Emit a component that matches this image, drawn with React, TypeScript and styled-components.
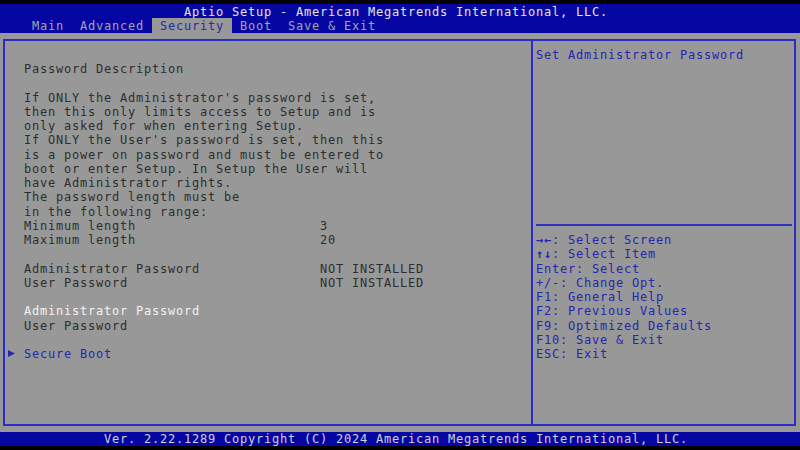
import styled, { createGlobalStyle } from 'styled-components';

const ROW = 14.25;

const GlobalStyle = createGlobalStyle`
    html, body {
        margin: 0;
        padding: 0;
        background: #000;
    }
`;

const Screen = styled.div`
    width: 800px;
    height: 450px;
    box-sizing: border-box;
    padding-top: 4px;
    background: #000;
    display: flex;
    flex-direction: column;
    font-family: "DejaVu Sans Mono", "Liberation Mono", monospace;
    font-size: 12px;
    letter-spacing: 0.776px;
    line-height: ${ROW}px;
    white-space: pre;
`;

const Header = styled.div`
    background: #0606a2;
`;

const Title = styled.div`
    height: ${ROW}px;
    box-sizing: border-box;
    padding: 2px 8px 0 0;
    line-height: ${ROW - 2}px;
    text-align: center;
    color: #e4e4e4;
`;

const TabBar = styled.div`
    display: flex;
    height: ${ROW}px;
    padding-left: 24px;
`;

const Tab = styled.div<{ $active?: boolean }>`
    box-sizing: border-box;
    height: ${ROW}px;
    padding: 2px 8px 0;
    line-height: ${ROW - 2}px;
    color: ${p => (p.$active ? '#2a2aa8' : '#a4a4b0')};
    background: ${p => (p.$active ? '#989898' : 'transparent')};
`;

const Body = styled.div`
    height: 399px;
    box-sizing: border-box;
    padding: 6px 4px 6px 3px;
    background: #989898;
`;

const Frame = styled.div`
    height: 100%;
    box-sizing: border-box;
    display: grid;
    grid-template-columns: 528px 1fr;
    border: 2px solid #2c2cc8;
`;

const LeftPanel = styled.div`
    padding: 21.5px 0 0 3px;
    border-right: 2px solid #2c2cc8;
`;

const RightPanel = styled.div`
    padding: 7.25px 2px 0 3px;
    color: #2626b0;
`;

type Tone = 'dark' | 'white' | 'blue';

const toneColor: Record<Tone, string> = {
    dark: '#2e2e2e',
    white: '#f2f2f2',
    blue: '#2626b0',
};

const Row = styled.div<{ $tone?: Tone }>`
    display: grid;
    grid-template-columns: 16px 296px auto;
    height: ${ROW}px;
    color: ${p => toneColor[p.$tone || 'dark']};
`;

const Marker = styled.div`
    display: flex;
    align-items: center;
    padding-bottom: 1px;
`;

const Spacer = styled.div<{ $rows: number }>`
    height: ${p => p.$rows * ROW}px;
`;

const Separator = styled.div`
    height: ${ROW}px;
    margin-top: -1px;
    margin-bottom: 1px;
    display: flex;
    align-items: center;

    &::after {
        content: '';
        flex: 1;
        height: 2px;
        background: #3232c0;
    }
`;

const HelpLine = styled.div`
    height: ${ROW}px;
`;

const Keys = styled.span`
    font-weight: bold;
`;

const Footer = styled.div`
    height: ${ROW}px;
    padding-right: 8px;
    text-align: center;
    background: #0606a2;
    color: #d0d0d8;
`;

const description = [
    'If ONLY the Administrator\'s password is set,',
    'then this only limits access to Setup and is',
    'only asked for when entering Setup.',
    'If ONLY the User\'s password is set, then this',
    'is a power on password and must be entered to',
    'boot or enter Setup. In Setup the User will',
    'have Administrator rights.',
    'The password length must be',
    'in the following range:',
];

const help: [string, string][] = [
    ['\u2192\u2190', ': Select Screen'],
    ['\u2191\u2193', ': Select Item'],
    ['', 'Enter: Select'],
    ['', '+/-: Change Opt.'],
    ['', 'F1: General Help'],
    ['', 'F2: Previous Values'],
    ['', 'F9: Optimized Defaults'],
    ['', 'F10: Save & Exit'],
    ['', 'ESC: Exit'],
];

const tabs = ['Main', 'Advanced', 'Security', 'Boot', 'Save & Exit'];

const Arrow = () => (
    <svg width="7" height="7" viewBox="0 0 7 7">
        <polygon points="0,0 7,3.5 0,7" fill="#2626b0" />
    </svg>
);

export default function App() {
    return (
        <>
            <GlobalStyle />
            <Screen>
                <Header>
                    <Title>Aptio Setup - American Megatrends International, LLC.</Title>
                    <TabBar>
                        {tabs.map(t => (
                            <Tab key={t} $active={t === 'Security'}>{t}</Tab>
                        ))}
                    </TabBar>
                </Header>
                <Body>
                    <Frame>
                        <LeftPanel>
                            <Row><span /><span>Password Description</span></Row>
                            <Spacer $rows={1} />
                            {description.map(line => (
                                <Row key={line}><span /><span>{line}</span></Row>
                            ))}
                            <Row><span /><span>Minimum length</span><span>3</span></Row>
                            <Row><span /><span>Maximum length</span><span>20</span></Row>
                            <Spacer $rows={1} />
                            <Row><span /><span>Administrator Password</span><span>NOT INSTALLED</span></Row>
                            <Row><span /><span>User Password</span><span>NOT INSTALLED</span></Row>
                            <Spacer $rows={1} />
                            <Row $tone="white"><span /><span>Administrator Password</span></Row>
                            <Row><span /><span>User Password</span></Row>
                            <Spacer $rows={1} />
                            <Row $tone="blue"><Marker><Arrow /></Marker><span>Secure Boot</span></Row>
                        </LeftPanel>
                        <RightPanel>
                            <HelpLine>Set Administrator Password</HelpLine>
                            <Spacer $rows={11} />
                            <Separator />
                            {help.map(([k, h]) => (
                                <HelpLine key={h}>{k && <Keys>{k}</Keys>}{h}</HelpLine>
                            ))}
                        </RightPanel>
                    </Frame>
                </Body>
                <Footer>Ver. 2.22.1289 Copyright (C) 2024 American Megatrends International, LLC.</Footer>
            </Screen>
        </>
    );
}
